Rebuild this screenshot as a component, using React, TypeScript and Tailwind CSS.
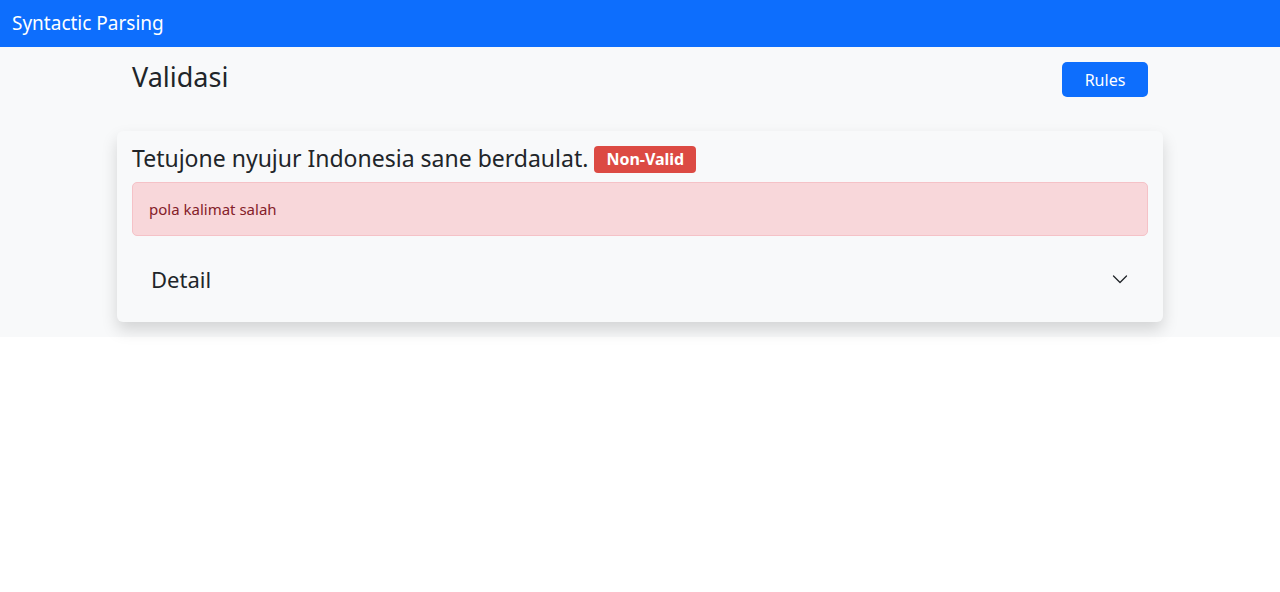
import React from 'react';

const font = { fontFamily: '"Noto Sans", "Liberation Sans", sans-serif' };

export default function App() {
    return (
        <div className="min-h-screen bg-white text-[#212529]" style={font}>
            {/* Navbar */}
            <nav className="h-[47px] bg-[#0d6efd] flex items-center px-3">
                <span className="text-white text-[19px] leading-none -mt-[1px]">Syntactic Parsing</span>
            </nav>

            {/* Main */}
            <section className="bg-[#f8f9fa] pb-[15px]">
                <div className="w-[1046px] mx-auto">
                    <div className="flex items-start justify-between px-[15px]">
                        <h3 className="mt-[14px] text-[27px] leading-[1.2] font-normal">Validasi</h3>
                        <button className="mt-[15px] h-[35px] w-[86px] rounded-[5px] bg-[#0d6efd] text-white text-[16px]">
                            Rules
                        </button>
                    </div>

                    <div className="mt-[34px] rounded-[6px] bg-[#f8f9fa] px-[15px] pt-[13px] shadow-[0_8px_16px_rgba(0,0,0,0.15)]">
                        <div className="h-[30px] flex items-center gap-[6px] mb-[8px]">
                            <h5 className="text-[23px] leading-[1.2] font-normal">Tetujone nyujur Indonesia sane berdaulat.</h5>
                            <span className="h-[27px] px-[12px] flex items-center rounded-[4px] bg-[#dc4a43] text-white text-[16px] font-bold">
                                Non-Valid
                            </span>
                        </div>

                        <div className="h-[54px] flex items-center px-[16px] rounded-[5px] bg-[#f8d7da] border border-[#f5c2c7] text-[#842029] text-[15px]">
                            pola kalimat salah
                        </div>

                        {/* Accordion */}
                        <button className="w-full h-[86px] flex items-center justify-between pl-[19px] pr-[20px]">
                            <span className="text-[22px] leading-none">Detail</span>
                            <svg width="16" height="16" viewBox="0 0 16 16" fill="none" stroke="#212529" strokeWidth="1.3" strokeLinecap="round" strokeLinejoin="round">
                                <polyline points="1.5,5 8,11.5 14.5,5" />
                            </svg>
                        </button>
                    </div>
                </div>
            </section>
        </div>
    );
}
